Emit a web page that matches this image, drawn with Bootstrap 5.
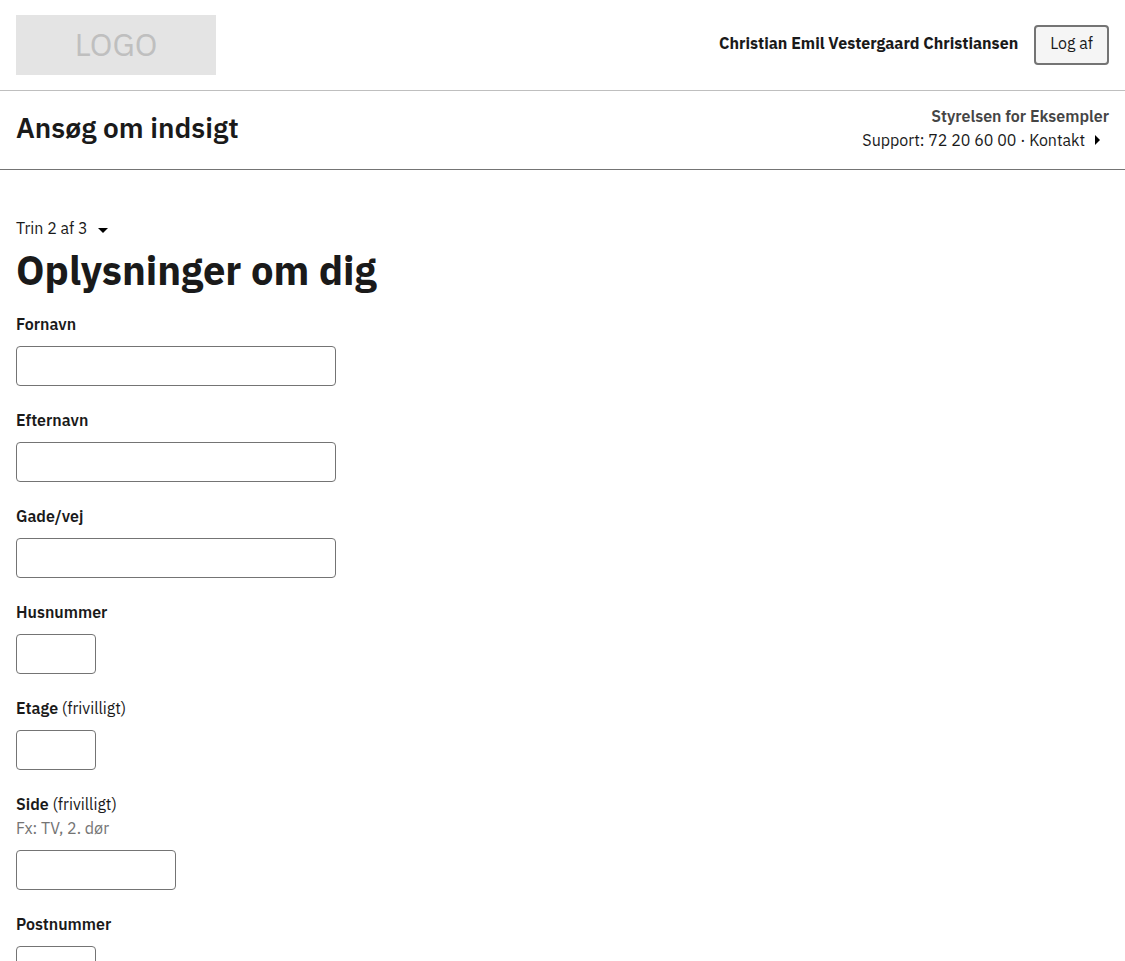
<!DOCTYPE html>
<html lang="da">
<head>
<meta charset="utf-8">
<meta name="viewport" content="width=device-width, initial-scale=1">
<title>Ansøg om indsigt</title>
<link rel="stylesheet" href="https://cdn.jsdelivr.net/npm/bootstrap@5.3.0/dist/css/bootstrap.min.css">
<style>
  body { font-family: "IBM Plex Sans", "Open Sans", sans-serif; font-size: 16px; line-height: 24px; color: #1a1a1a; background: #fff; }
  a { color: #1a1a1a; }
  .site-bar { min-height: 91px; border-bottom: 1px solid #bfbfbf; }
  .solution-bar { min-height: 79px; padding-bottom: 4px; border-bottom: 1px solid #747474; }
  .site-logo { width: 200px; height: 60px; background: #e4e4e4; fill: #bfbfbf; font-weight: 400; font-size: 32px; }
  .user-name { font-weight: 700; padding-bottom: 4px; }
  .authority { font-weight: 600; color: #454545; }
  .btn-logout { --bs-btn-padding-x: 14px; --bs-btn-border-width: 2px; --bs-btn-border-radius: 4px;
    --bs-btn-color: #1a1a1a; --bs-btn-bg: #f5f5f5; --bs-btn-border-color: #747474;
    --bs-btn-hover-bg: #dcdcdc; --bs-btn-hover-color: #1a1a1a; --bs-btn-hover-border-color: #747474;
    font-family: inherit; line-height: 24px; padding-top: 4px; padding-bottom: 8px; }
  h1 { font-size: 40px; line-height: 48px; font-weight: 700; margin: 6px 0 18px; }
  .solution-name { font-size: 28px; line-height: 36px; font-weight: 600; }
  .page-main { padding-top: 46px; }
  .step-button { font-family: inherit; color: inherit; line-height: 24px; }
  .field-list { gap: 22px; }
  .field-label { font-weight: 600; }
  .field-label .optional { font-weight: 400; }
  .hint { color: #747474; }
  .field-input { height: 40px; margin-top: 10px; border-color: #747474; border-radius: 4px; max-width: 320px; }
  .field-input.w-short { max-width: 80px; }
  .field-input.w-medium { max-width: 160px; }
</style>
</head>
<body>
<header>
  <div class="site-bar d-flex align-items-center justify-content-between px-3">
    <a href="#" aria-label="Logo">
      <svg class="site-logo d-block" viewBox="0 0 200 60"><text x="100" y="41" text-anchor="middle">LOGO</text></svg>
    </a>
    <div class="d-flex align-items-center gap-3">
      <span class="user-name">Christian Emil Vestergaard Christiansen</span>
      <button type="button" class="btn btn-logout">Log af</button>
    </div>
  </div>
  <div class="solution-bar d-flex align-items-center justify-content-between px-3">
    <a href="#" class="solution-name text-decoration-none">Ansøg om indsigt</a>
    <div class="text-end">
      <div class="authority">Styrelsen for Eksempler</div>
      <div class="d-flex align-items-center justify-content-end">
        <span>Support: 72 20 60 00 ·&nbsp;</span>
        <a href="#" class="d-flex align-items-center text-decoration-none">Kontakt
          <svg class="ms-2" width="16" height="24" viewBox="0 0 16 24" aria-hidden="true"><path d="M2 7l5 5-5 5z"/></svg>
        </a>
      </div>
    </div>
  </div>
</header>
<main class="page-main px-3">
  <button type="button" class="step-button btn btn-link p-0 border-0 d-flex align-items-center text-decoration-none">Trin 2 af 3
    <svg class="ms-2" width="16" height="24" viewBox="0 0 16 24" aria-hidden="true"><path d="M2 12h10l-5 5z"/></svg>
  </button>
  <h1>Oplysninger om dig</h1>
  <form class="field-list d-flex flex-column">
    <div>
      <label class="field-label d-block" for="fornavn">Fornavn</label>
      <input class="form-control field-input" id="fornavn" type="text">
    </div>
    <div>
      <label class="field-label d-block" for="efternavn">Efternavn</label>
      <input class="form-control field-input" id="efternavn" type="text">
    </div>
    <div>
      <label class="field-label d-block" for="gade">Gade/vej</label>
      <input class="form-control field-input" id="gade" type="text">
    </div>
    <div>
      <label class="field-label d-block" for="husnummer">Husnummer</label>
      <input class="form-control field-input w-short" id="husnummer" type="text">
    </div>
    <div>
      <label class="field-label d-block" for="etage">Etage <span class="optional">(frivilligt)</span></label>
      <input class="form-control field-input w-short" id="etage" type="text">
    </div>
    <div>
      <label class="field-label d-block" for="side">Side <span class="optional">(frivilligt)</span></label>
      <div class="hint" id="side-hint">Fx: TV, 2. dør</div>
      <input class="form-control field-input w-medium" id="side" type="text" aria-describedby="side-hint">
    </div>
    <div>
      <label class="field-label d-block" for="postnummer">Postnummer</label>
      <input class="form-control field-input w-short" id="postnummer" type="text">
    </div>
  </form>
</main>
<script src="https://cdn.jsdelivr.net/npm/bootstrap@5.3.0/dist/js/bootstrap.bundle.min.js"></script>
</body>
</html>
